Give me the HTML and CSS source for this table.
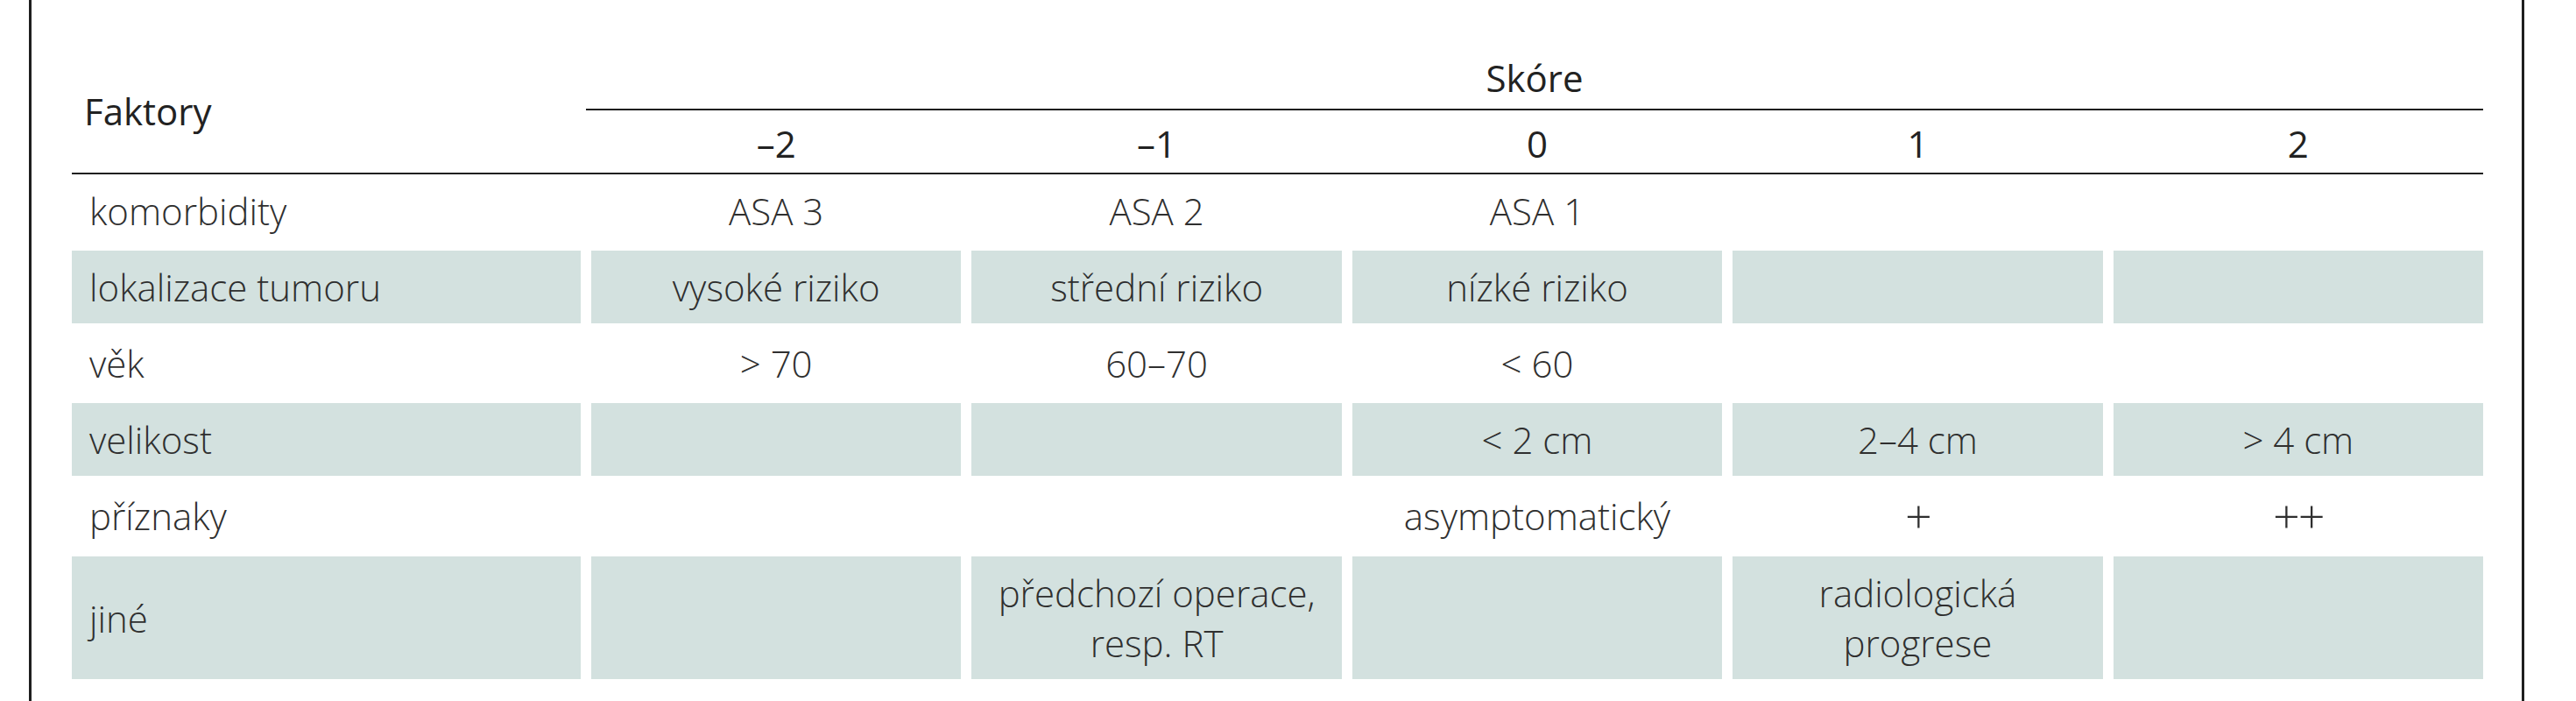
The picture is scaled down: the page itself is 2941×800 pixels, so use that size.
FILE: index.html
```html
<!DOCTYPE html>
<html lang="cs">
<head>
<meta charset="utf-8">
<title>Faktory – skóre</title>
<link rel="stylesheet" href="styles.css">
</head>
<body>
<div class="frame">
  <div class="table">
    <div class="head">
      <div class="h-factor">Faktory</div>
      <div class="h-score">Skóre</div>
      <div class="h-num">–2</div>
      <div class="h-num">–1</div>
      <div class="h-num">0</div>
      <div class="h-num">1</div>
      <div class="h-num">2</div>
    </div>
    <div class="body">
      <div class="row">
        <div class="cell label">komorbidity</div>
        <div class="cell">ASA 3</div>
        <div class="cell">ASA 2</div>
        <div class="cell">ASA 1</div>
        <div class="cell"></div>
        <div class="cell"></div>
      </div>
      <div class="row shade">
        <div class="cell label">lokalizace tumoru</div>
        <div class="cell">vysoké riziko</div>
        <div class="cell">střední riziko</div>
        <div class="cell">nízké riziko</div>
        <div class="cell"></div>
        <div class="cell"></div>
      </div>
      <div class="row">
        <div class="cell label">věk</div>
        <div class="cell">&gt; 70</div>
        <div class="cell">60–70</div>
        <div class="cell">&lt; 60</div>
        <div class="cell"></div>
        <div class="cell"></div>
      </div>
      <div class="row shade">
        <div class="cell label">velikost</div>
        <div class="cell"></div>
        <div class="cell"></div>
        <div class="cell">&lt; 2 cm</div>
        <div class="cell">2–4 cm</div>
        <div class="cell">&gt; 4 cm</div>
      </div>
      <div class="row">
        <div class="cell label">příznaky</div>
        <div class="cell"></div>
        <div class="cell"></div>
        <div class="cell">asymptomatický</div>
        <div class="cell"><span class="sym">+</span></div>
        <div class="cell"><span class="sym">++</span></div>
      </div>
      <div class="row shade">
        <div class="cell label label-mid">jiné</div>
        <div class="cell"></div>
        <div class="cell">předchozí operace,<br>resp. RT</div>
        <div class="cell"></div>
        <div class="cell">radiologická<br>progrese</div>
        <div class="cell"></div>
      </div>
    </div>
  </div>
</div>
</body>
</html>
```

FILE: styles.css
```css
html, body {
  margin: 0;
  padding: 0;
  background: #ffffff;
}

body {
  font-family: "Open Sans", "Liberation Sans", sans-serif;
  font-size: 42px;
  line-height: 57px;
  color: #2f2f2f;
}

.frame {
  box-sizing: border-box;
  margin-left: 33px;
  width: 2849px;
  height: 800px;
  border-left: 3px solid #1f1f1f;
  border-right: 3px solid #1f1f1f;
  padding: 60px 44px 0 46px;
  overflow: hidden;
}

.table {
  width: 2753px;
}

.head {
  display: grid;
  grid-template-columns: 581px repeat(5, 1fr);
  grid-template-rows: auto auto;
  column-gap: 12px;
  border-bottom: 2px solid #1f1f1f;
  font-weight: 400;
  color: #222222;
}

.h-factor {
  grid-column: 1;
  grid-row: 1 / 3;
  align-self: center;
  padding: 0 0 4px 14px;
}

.h-score {
  grid-column: 2 / 7;
  grid-row: 1;
  margin-left: -6px;
  padding-bottom: 7px;
  border-bottom: 2px solid #1f1f1f;
  text-align: center;
}

.h-num {
  grid-row: 2;
  padding: 9px 0 5px;
  text-align: center;
}

.body {
  display: flex;
  flex-direction: column;
  row-gap: 4px;
  font-weight: 300;
}

.row {
  display: grid;
  grid-template-columns: 581px repeat(5, 1fr);
  column-gap: 12px;
}

.cell {
  padding: 13px 8px;
  min-height: 57px;
  text-align: center;
}

.cell.label {
  text-align: left;
  padding-left: 20px;
}

.label-mid {
  display: flex;
  align-items: center;
}

.sym {
  font-size: 54px;
  line-height: 57px;
  vertical-align: -3px;
  letter-spacing: -2px;
}

.shade .cell {
  background: #d3e1df;
}
```
